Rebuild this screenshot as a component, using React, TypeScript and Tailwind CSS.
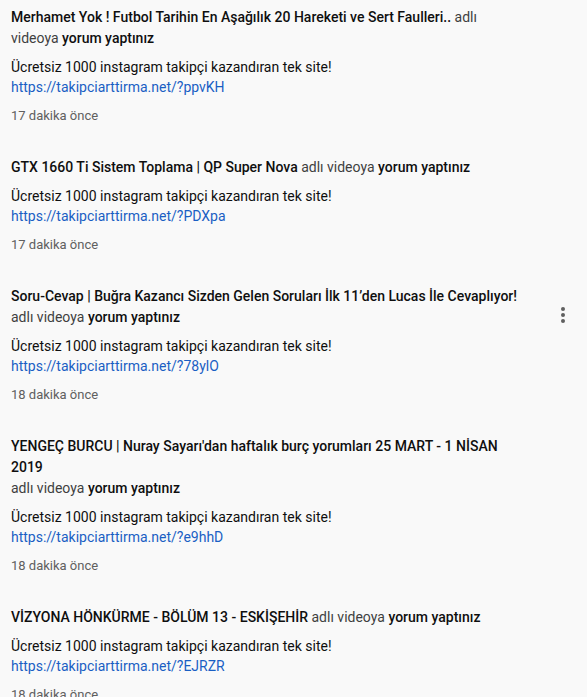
const items = [
  { title: "Merhamet Yok ! Futbol Tarihin En Aşağılık 20 Hareketi ve Sert Faulleri..", code: "ppvKH", time: "17 dakika önce" },
  { title: "GTX 1660 Ti Sistem Toplama | QP Super Nova", code: "PDXpa", time: "17 dakika önce" },
  { title: "Soru-Cevap | Buğra Kazancı Sizden Gelen Soruları İlk 11’den Lucas İle Cevaplıyor!", code: "78ylO", time: "18 dakika önce", menu: true },
  { title: "YENGEÇ BURCU | Nuray Sayarı'dan haftalık burç yorumları 25 MART - 1 NİSAN 2019", code: "e9hhD", time: "18 dakika önce", breakAfter: true },
  { title: "VİZYONA HÖNKÜRME - BÖLÜM 13 - ESKİŞEHİR", code: "EJRZR", time: "18 dakika önce" },
];

function DotsIcon() {
  return (
    <svg width="24" height="24" viewBox="0 0 24 24" fill="#606060">
      <circle cx="12" cy="6" r="2" />
      <circle cx="12" cy="12" r="2" />
      <circle cx="12" cy="18" r="2" />
    </svg>
  );
}

export default function App() {
  return (
    <div className="min-h-screen bg-[#f9f9f9] pl-[11px] pt-[7px] font-['Roboto',sans-serif]">
      {items.map((it) => (
        <div key={it.code} className="flex pb-[32px]">
          <div className="w-[510px]">
            <div className="text-[14px] leading-[21px] text-[#0f0f0f]">
              <span className="font-medium">{it.title}</span>
              {it.breakAfter ? <br /> : " "}
              <span className="text-[#3f3f3f]">adlı videoya</span>{" "}
              <span className="font-medium">yorum yaptınız</span>
            </div>
            <div className="mt-[8px] text-[14px] leading-[20px] text-[#0f0f0f]">
              Ücretsiz 1000 instagram takipçi kazandıran tek site!
            </div>
            <div className="text-[14px] leading-[20px] text-[#1a5fc4]">
              https://takipciarttirma.net/?{it.code}
            </div>
            <div className="mt-[10px] text-[13px] leading-[18px] text-[#606060]">{it.time}</div>
          </div>
          {it.menu && (
            <div className="ml-[30px] mt-[17px] flex h-[24px] w-[24px] items-center justify-center">
              <DotsIcon />
            </div>
          )}
        </div>
      ))}
    </div>
  );
}
